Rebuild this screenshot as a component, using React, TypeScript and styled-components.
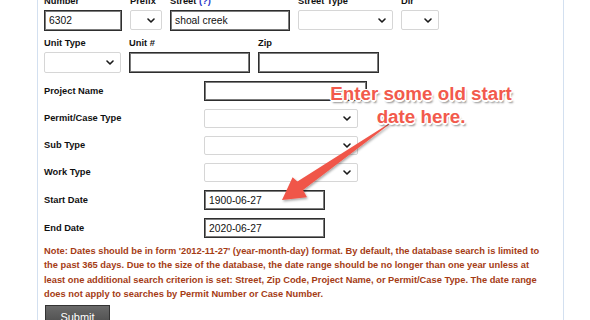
import React, { FC } from 'react';
import styled, { createGlobalStyle } from 'styled-components';

const GlobalStyle = createGlobalStyle`
  html, body {
    margin: 0;
    padding: 0;
    background: #fff;
  }
  body {
    font-family: "Liberation Sans", Arial, sans-serif;
  }
`;

const Page = styled.div`
  position: relative;
  display: flow-root;
  width: 590px;
  height: 320px;
  overflow: hidden;
  background: #fff;
`;

const Panel = styled.div`
  margin: -4px 0 0 37px;
  width: 519px;
  min-height: 340px;
  padding-left: 6px;
  border-left: 1px solid #d3e0f0;
  border-right: 1px solid #d3e0f0;
  display: flex;
  flex-direction: column;
`;

const FieldRow = styled.div<{ $top?: number }>`
  display: flex;
  gap: 8px;
  margin-top: ${(p) => p.$top ?? 0}px;
`;

const Field = styled.div`
  display: flex;
  flex-direction: column;
`;

const Label = styled.div`
  font-size: 9.3px;
  font-weight: bold;
  line-height: 11px;
  color: #111;
  margin-bottom: 3px;
  white-space: nowrap;
`;

const Help = styled.span`
  color: #2a35c8;
`;

const TextBox = styled.div<{ $w: number; $h?: number }>`
  box-sizing: border-box;
  width: ${(p) => p.$w}px;
  height: ${(p) => p.$h ?? 21}px;
  border: 1px solid #2e2e2e;
  box-shadow: inset 0 0 0 1px #7c7c7c;
  padding-left: 4px;
  display: flex;
  align-items: center;
  font-size: 10.3px;
  color: #111;
  background: #fff;
`;

const SelectBox = styled.div<{ $w: number; $h?: number }>`
  box-sizing: border-box;
  width: ${(p) => p.$w}px;
  height: ${(p) => p.$h ?? 20}px;
  border: 1px solid #d6d6d6;
  border-radius: 2px;
  background: #fff;
  display: flex;
  align-items: center;
  justify-content: flex-end;
  padding-right: 6px;
`;

const Chevron: FC = () => (
  <svg width="8" height="5" viewBox="0 0 8 5">
    <path d="M1 1 L4 4 L7 1" fill="none" stroke="#1a1a1a" strokeWidth="1.6" strokeLinecap="round" strokeLinejoin="round" />
  </svg>
);

const Select: FC<{ w: number; h?: number }> = ({ w, h }) => (
  <SelectBox $w={w} $h={h}>
    <Chevron />
  </SelectBox>
);

const Rows = styled.div`
  margin-top: 8px;
  display: flex;
  flex-direction: column;
  gap: 8px;
`;

const Row = styled.div`
  display: flex;
  align-items: center;
`;

const RowLabel = styled(Label)`
  width: 160px;
  margin-bottom: 0;
`;

const Note = styled.p`
  margin: 6px 0 0;
  width: 500px;
  font-size: 9.3px;
  font-weight: bold;
  line-height: 14.3px;
  color: #a53c15;
`;

const Submit = styled.button`
  margin: 4px 0 0 1px;
  width: 65px;
  height: 24px;
  border: 1px solid #333;
  background: linear-gradient(#6a6a6a, #474747);
  color: #fff;
  font-family: "Liberation Sans", Arial, sans-serif;
  font-size: 11px;
  padding: 0;
  align-self: flex-start;
`;

const Callout = styled.div`
  position: absolute;
  left: 300px;
  top: 82px;
  width: 242px;
  text-align: center;
  font-size: 18.8px;
  font-weight: bold;
  line-height: 23px;
  color: #f25a4c;
  text-shadow:
    1.5px 0 0 #fff, -1.5px 0 0 #fff, 0 1.5px 0 #fff, 0 -1.5px 0 #fff,
    1px 1px 0 #fff, -1px -1px 0 #fff, 1px -1px 0 #fff, -1px 1px 0 #fff,
    1.5px 2.5px 2px rgba(0, 0, 0, 0.45);
`;

const ArrowSvg = styled.svg`
  position: absolute;
  left: 270px;
  top: 115px;
  overflow: visible;
`;

const Arrow: FC = () => (
  <ArrowSvg width="130" height="95" viewBox="270 115 130 95">
    <defs>
      <filter id="sh" x="-20%" y="-20%" width="140%" height="140%">
        <feDropShadow dx="1" dy="1.5" stdDeviation="1.2" floodColor="#000" floodOpacity="0.35" />
      </filter>
    </defs>
    <path
      d="M391 122.2 L389.2 124.6 L303 190 L307 197.2 L282 200 L292.6 177.2 L297.4 181.6 Z"
      fill="#f0564a"
      filter="url(#sh)"
    />
  </ArrowSvg>
);

const App: FC = () => (
  <Page>
    <GlobalStyle />
    <Panel>
      <FieldRow>
        <Field>
          <Label>Number</Label>
          <TextBox $w={78}>6302</TextBox>
        </Field>
        <Field>
          <Label>Prefix</Label>
          <Select w={32} />
        </Field>
        <Field>
          <Label>
            Street <Help>(?)</Help>
          </Label>
          <TextBox $w={120}>shoal creek</TextBox>
        </Field>
        <Field>
          <Label>Street Type</Label>
          <Select w={95} />
        </Field>
        <Field>
          <Label>Dir</Label>
          <Select w={38} />
        </Field>
      </FieldRow>
      <FieldRow $top={7}>
        <Field>
          <Label>Unit Type</Label>
          <Select w={77} h={21} />
        </Field>
        <Field>
          <Label>Unit #</Label>
          <TextBox $w={121} />
        </Field>
        <Field>
          <Label>Zip</Label>
          <TextBox $w={121} />
        </Field>
      </FieldRow>
      <Rows>
        <Row>
          <RowLabel>Project Name</RowLabel>
          <TextBox $w={163} $h={20} />
        </Row>
        <Row>
          <RowLabel>Permit/Case Type</RowLabel>
          <Select w={154} h={19} />
        </Row>
        <Row>
          <RowLabel>Sub Type</RowLabel>
          <Select w={154} h={19} />
        </Row>
        <Row>
          <RowLabel>Work Type</RowLabel>
          <Select w={154} h={19} />
        </Row>
        <Row>
          <RowLabel>Start Date</RowLabel>
          <TextBox $w={121} $h={20}>1900-06-27</TextBox>
        </Row>
        <Row>
          <RowLabel>End Date</RowLabel>
          <TextBox $w={121} $h={20}>2020-06-27</TextBox>
        </Row>
      </Rows>
      <Note>
        Note: Dates should be in form '2012-11-27' (year-month-day) format. By default, the database search is limited to
        the past 365 days. Due to the size of the database, the date range should be no longer than one year unless at
        least one additional search criterion is set: Street, Zip Code, Project Name, or Permit/Case Type. The date range
        does not apply to searches by Permit Number or Case Number.
      </Note>
      <Submit type="button">Submit</Submit>
    </Panel>
    <Arrow />
    <Callout>
      Enter some old start
      <br />
      date here.
    </Callout>
  </Page>
);

export default App;
